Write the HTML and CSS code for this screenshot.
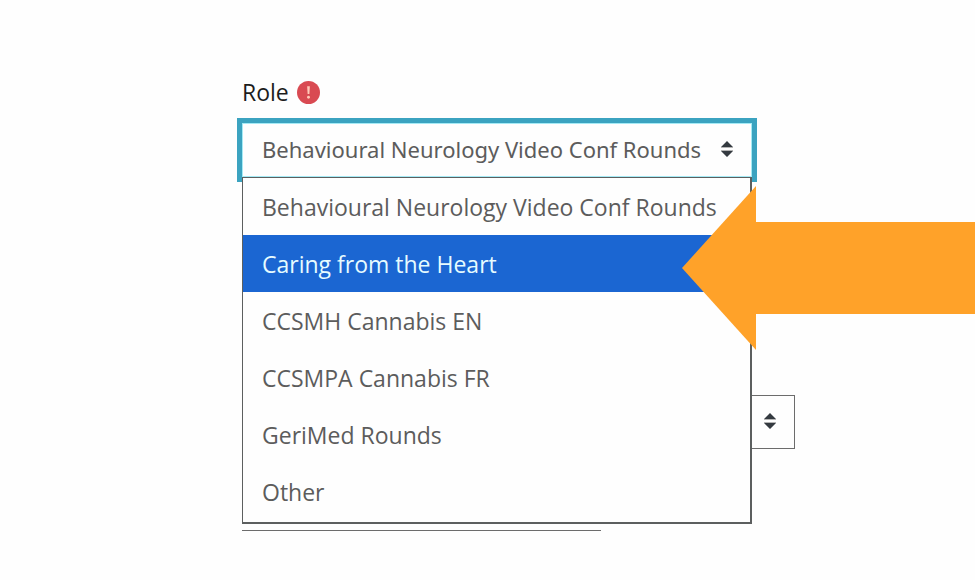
FILE: index.html
```html
<!DOCTYPE html>
<html lang="en">
<head>
<meta charset="utf-8">
<meta name="viewport" content="width=device-width, initial-scale=1">
<title>Role</title>
<link rel="stylesheet" href="styles.css">
</head>
<body>
<main class="page">
  <form class="form">
    <div class="label-row">
      <label for="role">Role</label>
      <svg class="required" viewBox="0 0 24 24" role="img" aria-label="Required">
        <circle cx="12" cy="12" r="12" fill="#d94a52"/>
        <path d="M10.6 5.5h2.8l-.5 8h-1.8z" fill="#ffc9b8"/>
        <circle cx="12" cy="17" r="1.5" fill="#ffc9b8"/>
      </svg>
    </div>
    <div class="role">
      <div class="select-wrap focused">
        <select id="role" class="control">
          <option>Behavioural Neurology Video Conf Rounds</option>
          <option>Caring from the Heart</option>
          <option>CCSMH Cannabis EN</option>
          <option>CCSMPA Cannabis FR</option>
          <option>GeriMed Rounds</option>
          <option>Other</option>
        </select>
        <svg class="caret" viewBox="0 0 12 16" aria-hidden="true"><path d="M6 0l6 6H0zM6 16l6-6H0z" fill="#343a40"/><path d="M0 6h12v1H0zM0 9h12v1H0z" fill="#b5b5b5"/></svg>
      </div>
      <ul class="menu" role="listbox" aria-label="Role">
        <li class="option" role="option" aria-selected="false">Behavioural Neurology Video Conf Rounds</li>
        <li class="option active" role="option" aria-selected="true">Caring from the Heart</li>
        <li class="option" role="option" aria-selected="false">CCSMH Cannabis EN</li>
        <li class="option" role="option" aria-selected="false">CCSMPA Cannabis FR</li>
        <li class="option" role="option" aria-selected="false">GeriMed Rounds</li>
        <li class="option" role="option" aria-selected="false">Other</li>
      </ul>
    </div>
    <div class="select-wrap lower">
      <select class="control" aria-label="Choice"><option></option></select>
      <svg class="caret" viewBox="0 0 12 16" aria-hidden="true"><path d="M6 0l6 6H0zM6 16l6-6H0z" fill="#343a40"/><path d="M0 6h12v1H0zM0 9h12v1H0z" fill="#b5b5b5"/></svg>
    </div>
    <input class="control short" type="text" aria-label="Details">
  </form>
  <div class="arrow" aria-hidden="true">
    <svg class="arrow-head" viewBox="0 0 74 164"><path d="M0 82L74 0v164z" fill="#ffa229"/></svg>
    <div class="arrow-body"></div>
  </div>
</main>
</body>
</html>
```
FILE: styles.css
```css
* {
  box-sizing: border-box;
}

body {
  margin: 0;
  background: #fefefe;
  color: #5c5c5c;
  font: 23px/30px "Open Sans", "Noto Sans", sans-serif;
}

.page {
  position: relative;
  min-height: 100vh;
  padding: 77px 180px 48px 242px;
  overflow: hidden;
}

.label-row {
  display: flex;
  align-items: center;
  gap: 8px;
  margin-bottom: 16px;
  color: #1c1c1c;
}

.required {
  width: 23px;
  height: 23px;
}

.role {
  position: relative;
  margin-right: 43px;
}

.select-wrap {
  position: relative;
}

.control {
  display: block;
  width: 100%;
  height: 54px;
  margin: 0;
  padding: 0 19px 2px;
  border: 1px solid #6c6c6c;
  border-radius: 0;
  outline: 0;
  background: #fefefe;
  color: #5c5c5c;
  font: 22px/30px "Noto Sans", "Open Sans", sans-serif;
  appearance: none;
}

.focused .control {
  border-color: #a5eaf5;
  box-shadow: 0 0 0 5px #3ba3c0;
}

.caret {
  position: absolute;
  top: 18px;
  right: 19px;
  width: 12px;
  height: 16px;
}

.menu {
  position: absolute;
  z-index: 1;
  top: 54px;
  left: 0;
  right: 0;
  margin: 0;
  padding: 0 0 2px;
  border: 1px solid #5c5f5f;
  border-right-width: 2px;
  border-bottom-width: 2px;
  background: #fefefe;
  list-style: none;
}

.option {
  padding: 2px 19px 0;
  line-height: 55px;
  white-space: nowrap;
}

.active {
  background: #1b66d2;
  color: #e6fbff;
}

.lower {
  margin-top: 218px;
}

.short {
  width: 65%;
  margin-top: 28px;
  border-width: 0 0 1px;
}

.arrow {
  position: absolute;
  z-index: 2;
  top: 186px;
  right: 0;
  display: flex;
  align-items: center;
  width: 293px;
}

.arrow-head {
  flex: none;
  width: 74px;
  height: 164px;
}

.arrow-body {
  flex: 1;
  height: 92px;
  background: #ffa229;
}
```
